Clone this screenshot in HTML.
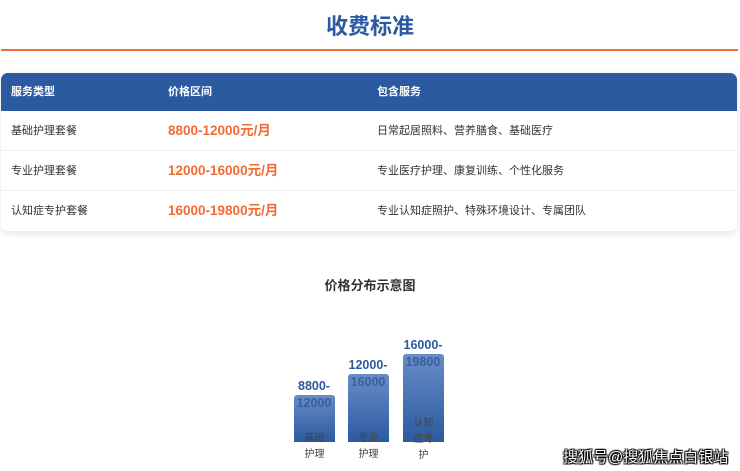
<!DOCTYPE html>
<html><head><meta charset="utf-8"><style>
*{margin:0;padding:0;box-sizing:border-box}
body{width:740px;height:471px;background:#fff;font-family:"Liberation Sans","Noto Sans CJK SC",sans-serif;position:relative;overflow:hidden;color:#333}
.a{position:absolute;white-space:nowrap}
h1{position:absolute;left:0;width:740px;top:12px;text-align:center;font-size:22px;color:#2c5aa0;font-weight:bold;line-height:30px}
.line{position:absolute;left:1px;width:737px;top:49px;height:2px;background:#f26b35}
.tbl{position:absolute;left:1px;top:73px;width:736px;height:158px;border-radius:7px;box-shadow:0 2px 8px rgba(0,0,0,.12);overflow:hidden;background:#fff}
.hd{height:38px;background:#2b5aa0;position:relative}
.row{height:40px;border-bottom:1px solid #eee;position:relative}
.row:last-child{border-bottom:none}
.c{position:absolute;top:0;line-height:40px;font-size:11px;color:#333}
.hd .c{line-height:38px;color:#fff;font-weight:bold;font-size:11px}
.p{color:#f26b35;font-weight:bold;font-size:13.5px}
.bar{position:absolute;width:41px;border-radius:3px 3px 0 0;background:linear-gradient(#6a8cc8,#2b5aa0)}
.v{position:absolute;font-size:12.5px;font-weight:bold;color:#2c5aa0;text-align:center;width:60px}
.l{position:absolute;font-size:10px;color:#444;text-align:center;width:41px;line-height:16px}
.wm{position:absolute;left:563px;top:446px;font-size:15px;color:#fff;text-shadow:0 0 1px #000,1px 1px 1px #000,-1px -1px 1px #000,1px -1px 1px #000,-1px 1px 1px #000}
</style></head><body>
<h1>收费标准</h1>
<div class="line"></div>
<div class="tbl">
<div class="hd"><span class="c" style="left:10px">服务类型</span><span class="c" style="left:167px">价格区间</span><span class="c" style="left:376px">包含服务</span></div>
<div class="row"><span class="c" style="left:10px">基础护理套餐</span><span class="c p" style="left:167px">8800-12000元/月</span><span class="c" style="left:376px">日常起居照料、营养膳食、基础医疗</span></div>
<div class="row"><span class="c" style="left:10px">专业护理套餐</span><span class="c p" style="left:167px">12000-16000元/月</span><span class="c" style="left:376px">专业医疗护理、康复训练、个性化服务</span></div>
<div class="row"><span class="c" style="left:10px">认知症专护套餐</span><span class="c p" style="left:167px">16000-19800元/月</span><span class="c" style="left:376px">专业认知症照护、特殊环境设计、专属团队</span></div>
</div>
<div class="a" style="left:0;width:740px;text-align:center;top:275px;font-size:13px;font-weight:bold;color:#333">价格分布示意图</div>
<div class="bar" style="left:294px;top:395px;height:47px"></div>
<div class="bar" style="left:348px;top:374px;height:68px"></div>
<div class="bar" style="left:403px;top:354px;height:88px"></div>
<div class="v" style="left:284px;top:379px">8800-</div>
<div class="v" style="left:284px;top:396px;color:#3a5f9e">12000</div>
<div class="v" style="left:338px;top:358px">12000-</div>
<div class="v" style="left:338px;top:375px;color:#3a5f9e">16000</div>
<div class="v" style="left:393px;top:338px">16000-</div>
<div class="v" style="left:393px;top:355px;color:#3a5f9e">19800</div>
<div class="l" style="left:294px;top:431px">基础<br>护理</div>
<div class="l" style="left:348px;top:431px">专业<br>护理</div>
<div class="l" style="left:403px;top:416px">认知<br>症专<br>护</div>
<div class="wm">搜狐号@搜狐焦点白银站</div>
</body></html>
